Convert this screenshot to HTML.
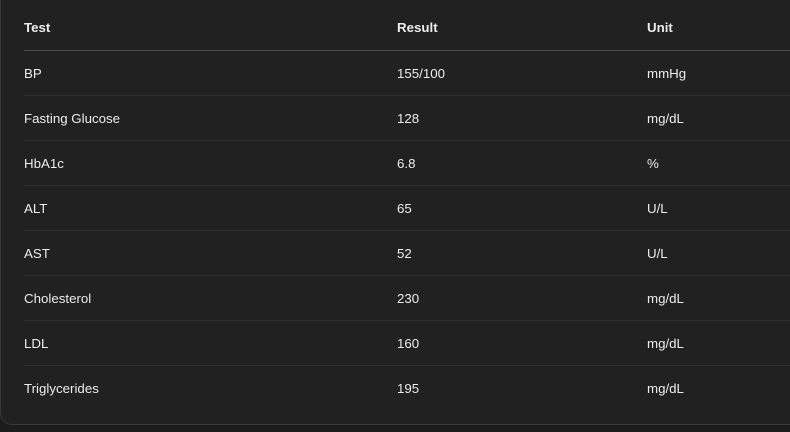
<!DOCTYPE html>
<html><head><style>
html,body{margin:0;padding:0;background:#1c1c1c;width:790px;height:432px;overflow:hidden}
.box{position:absolute;left:0;top:-20px;width:820px;height:445px;background:#212121;border:1px solid #383838;border-radius:12px;box-sizing:border-box}
.row{position:absolute;left:24px;right:0;height:44px;font:13.3px "Liberation Sans",sans-serif;color:#ececec}
.row span{position:absolute;top:0;line-height:45px}
.c1{left:0}.c2{left:373px}.c3{left:623px}
.h{font-weight:bold;border-bottom:1px solid #4a4a4a;height:50px}
.h span{line-height:56px}
.r{border-bottom:1px solid #2f2f2f}
</style></head><body>
<div class="box"></div>
<div class="row h" style="top:0"><span class="c1">Test</span><span class="c2">Result</span><span class="c3">Unit</span></div>
<div class="row r" style="top:51px"><span class="c1">BP</span><span class="c2">155/100</span><span class="c3">mmHg</span></div>
<div class="row r" style="top:96px"><span class="c1">Fasting Glucose</span><span class="c2">128</span><span class="c3">mg/dL</span></div>
<div class="row r" style="top:141px"><span class="c1">HbA1c</span><span class="c2">6.8</span><span class="c3">%</span></div>
<div class="row r" style="top:186px"><span class="c1">ALT</span><span class="c2">65</span><span class="c3">U/L</span></div>
<div class="row r" style="top:231px"><span class="c1">AST</span><span class="c2">52</span><span class="c3">U/L</span></div>
<div class="row r" style="top:276px"><span class="c1">Cholesterol</span><span class="c2">230</span><span class="c3">mg/dL</span></div>
<div class="row r" style="top:321px"><span class="c1">LDL</span><span class="c2">160</span><span class="c3">mg/dL</span></div>
<div class="row" style="top:366px"><span class="c1">Triglycerides</span><span class="c2">195</span><span class="c3">mg/dL</span></div>
</body></html>
